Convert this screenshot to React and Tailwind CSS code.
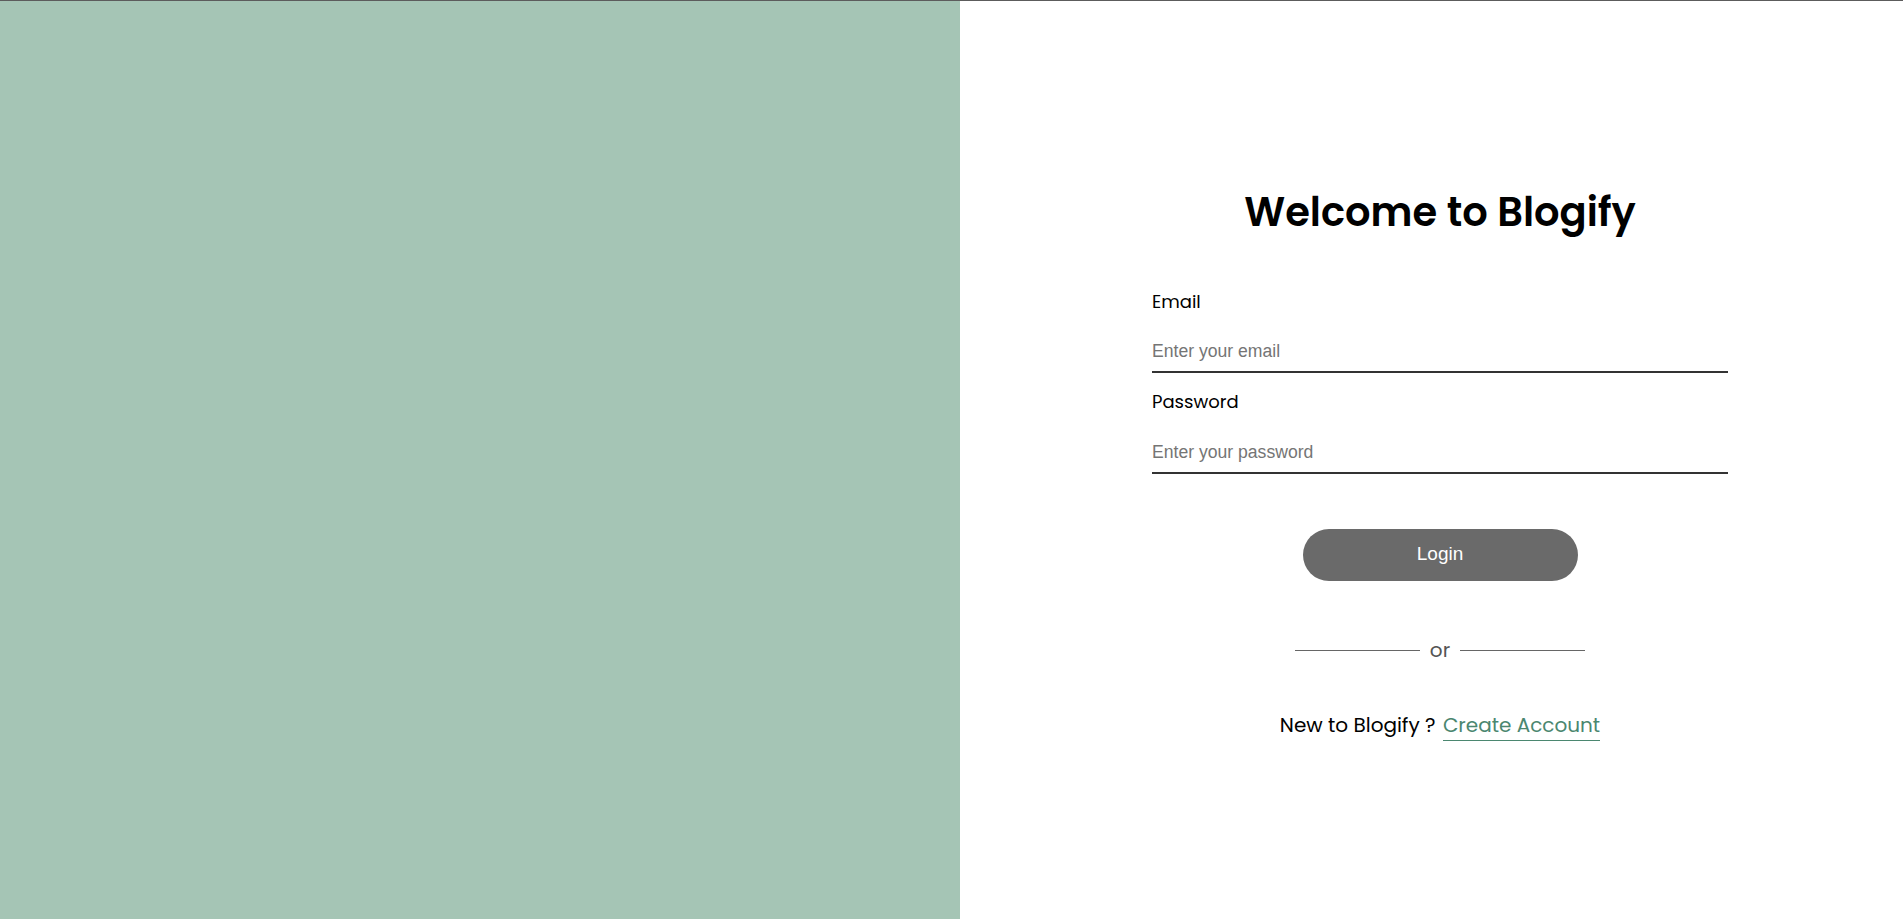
import { useState } from "react";

function App() {
  const [email, setEmail] = useState("");
  const [password, setPassword] = useState("");

  const handleSubmit = (e) => {
    e.preventDefault();
  };

  return (
    <div className="h-screen w-full overflow-hidden border-t border-[#5c5c5c] flex bg-white">
      {/* painel esquerdo */}
      <div className="w-[960px] shrink-0 h-full bg-[#a5c5b5]" />

      {/* painel do formulário */}
      <div className="w-[960px] shrink-0 h-full flex flex-col items-center pt-[187px] font-['Poppins','Open_Sans',sans-serif] text-black">
        <h1 className="text-[40px] leading-[48px] font-semibold">
          Welcome to Blogify
        </h1>

        <form onSubmit={handleSubmit} className="w-[576px] flex flex-col mt-[52px]">
          <label htmlFor="email" className="text-[18px] leading-[27px]">
            Email
          </label>
          <input
            id="email"
            type="email"
            value={email}
            onChange={(e) => setEmail(e.target.value)}
            placeholder="Enter your email"
            className="mt-[16px] h-[42px] w-full border-b-2 border-[#333] bg-transparent font-['Liberation_Sans',Arial,sans-serif] text-[17.6px] text-black placeholder:text-[#757575] outline-none"
          />

          <label htmlFor="password" className="mt-[15px] text-[18px] leading-[27px]">
            Password
          </label>
          <input
            id="password"
            type="password"
            value={password}
            onChange={(e) => setPassword(e.target.value)}
            placeholder="Enter your password"
            className="mt-[17px] h-[42px] w-full border-b-2 border-[#333] bg-transparent font-['Liberation_Sans',Arial,sans-serif] text-[17.6px] text-black placeholder:text-[#757575] outline-none"
          />

          <button
            type="submit"
            className="mt-[55px] self-center w-[275px] h-[52px] rounded-full bg-[#6a6a6a] text-white font-['Liberation_Sans',Arial,sans-serif] text-[19px] leading-[22px] pb-[2px]"
          >
            Login
          </button>
        </form>

        {/* divisor "or" */}
        <div className="mt-[54px] flex items-center h-[30px]">
          <span className="w-[125px] h-px bg-[#666]" />
          <span className="mx-[10px] text-[20px] leading-[30px] text-[#555]">or</span>
          <span className="w-[125px] h-px bg-[#666]" />
        </div>

        <p className="mt-[45px] text-[20px] leading-[30px]">
          New to Blogify ?{" "}
          <a href="#" className="ml-[2px] inline-block text-[#4b8770] border-b border-[#4b8770]">
            Create Account
          </a>
        </p>
      </div>
    </div>
  );
}

export default App;
